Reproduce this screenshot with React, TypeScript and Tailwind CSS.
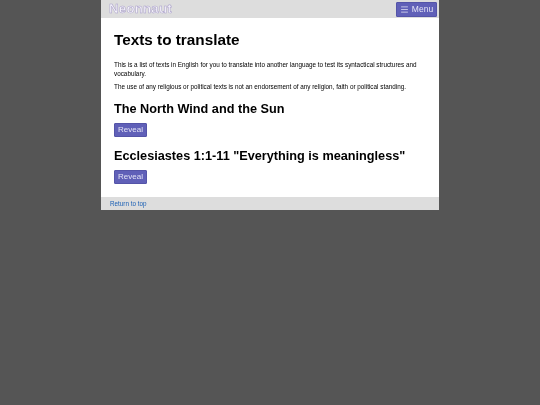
import { Menu } from "lucide-react";

function RevealButton() {
  return (
    <button className="block h-[14px] w-[33px] rounded-[1px] border border-[#5454a8] bg-[#6060b8] text-center text-[8px] leading-[12px] text-[#e4e4f6]">
      Reveal
    </button>
  );
}

export default function App() {
  return (
    <div className="min-h-[405px] bg-[#555555] font-['Liberation_Sans',Arial,sans-serif] text-black">
      <div className="mx-auto flex w-[338px] flex-col [will-change:transform]">
        <header className="flex h-[18px] items-center justify-between bg-[#dddddd] pl-[8px] pr-[2px]">
          <span className="text-[13.3px] font-bold leading-[18px] tracking-[0.2px] text-[#f4f2fa] [-webkit-text-stroke:0.5px_#a89ec8]">
            Neonnaut
          </span>
          <button className="flex h-[15px] w-[41px] items-center justify-center gap-[3px] rounded-[1px] border border-[#5454a8] bg-[#6060b8] text-[8.5px] leading-[13px] text-[#e4e4f6]">
            <Menu size={9} strokeWidth={2} />
            <span>Menu</span>
          </button>
        </header>
        <main className="h-[179px] bg-white px-[13px] pt-[13px]">
          <h1 className="text-[15.3px] font-bold leading-[18px]">Texts to translate</h1>
          <p className="mt-[11px] text-[6.35px] leading-[9px]">
            This is a list of texts in English for you to translate into another language to test its syntactical structures and vocabulary.
          </p>
          <p className="mt-[4px] text-[6.35px] leading-[9px]">
            The use of any religious or political texts is not an endorsement of any religion, faith or political standing.
          </p>
          <h2 className="mt-[9.5px] text-[12.7px] font-bold leading-[16px]">The North Wind and the Sun</h2>
          <div className="mt-[6.5px]"><RevealButton /></div>
          <h2 className="mt-[11px] text-[12.7px] font-bold leading-[16px]">Ecclesiastes 1:1-11 "Everything is meaningless"</h2>
          <div className="mt-[6px]"><RevealButton /></div>
        </main>
        <footer className="flex h-[13px] items-center bg-[#dddddd] px-[9px] text-[6.3px] text-[#1a5fb4]">
          Return to top
        </footer>
      </div>
    </div>
  );
}
